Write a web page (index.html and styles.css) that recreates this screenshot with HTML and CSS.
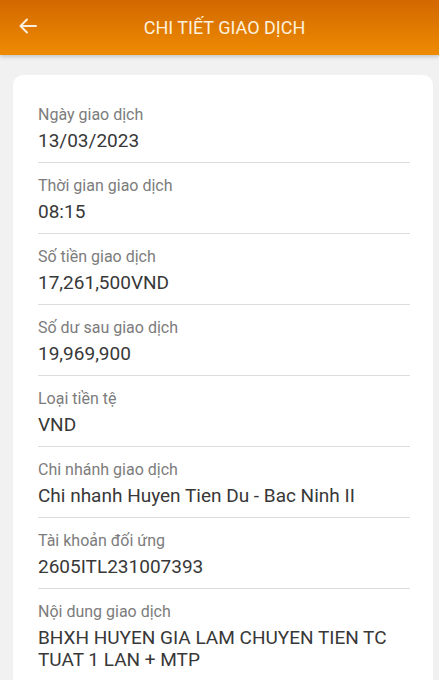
FILE: index.html
```html
<!DOCTYPE html>
<html lang="vi">
<head>
<meta charset="utf-8">
<title>Chi tiết giao dịch</title>
<link rel="stylesheet" href="styles.css">
</head>
<body>
<header class="appbar">
  <button class="back" aria-label="Quay lại">
    <svg width="18" height="16" viewBox="0 0 18 16" fill="none" stroke="currentColor" stroke-width="2" stroke-linecap="round" stroke-linejoin="round"><path d="M17 8H2M8 1.5L1.5 8 8 14.5"/></svg>
  </button>
  <h1 class="title">CHI TIẾT GIAO DỊCH</h1>
</header>
<main class="content">
  <section class="card">
    <div class="row"><div class="label">Ngày giao dịch</div><div class="value">13/03/2023</div></div>
    <div class="row"><div class="label">Thời gian giao dịch</div><div class="value">08:15</div></div>
    <div class="row"><div class="label">Số tiền giao dịch</div><div class="value">17,261,500VND</div></div>
    <div class="row"><div class="label">Số dư sau giao dịch</div><div class="value">19,969,900</div></div>
    <div class="row"><div class="label">Loại tiền tệ</div><div class="value">VND</div></div>
    <div class="row"><div class="label">Chi nhánh giao dịch</div><div class="value">Chi nhanh Huyen Tien Du - Bac Ninh II</div></div>
    <div class="row"><div class="label">Tài khoản đối ứng</div><div class="value">2605ITL231007393</div></div>
    <div class="row last"><div class="label">Nội dung giao dịch</div><div class="value">BHXH HUYEN GIA LAM CHUYEN TIEN TC TUAT 1 LAN + MTP</div></div>
  </section>
</main>
</body>
</html>
```
FILE: styles.css
```css
* { box-sizing: border-box; }
html, body { margin: 0; padding: 0; }
body {
  background: #f1f1f1;
  font-family: Roboto, "Noto Sans", "Liberation Sans", sans-serif;
  width: 439px;
  height: 680px;
  overflow: hidden;
}
.appbar {
  height: 55px;
  background: linear-gradient(to bottom, #d26800, #ee8b02);
  display: flex;
  align-items: center;
  justify-content: center;
  position: relative;
  box-shadow: 0 2px 4px rgba(0,0,0,0.18);
}
.back {
  position: absolute;
  left: 19px;
  top: 18px;
  width: 18px;
  height: 16px;
  padding: 0;
  border: 0;
  background: none;
  color: #fbeedd;
  display: flex;
}
.title {
  margin: 0 0 0 10px;
  font-size: 18px;
  font-weight: 400;
  color: #fdf0dc;
  letter-spacing: 0;
}
.content {
  padding: 20px 6px 0 13px;
}
.card {
  background: #fff;
  border-radius: 10px;
  padding: 17px 23px 0 25px;
  min-height: 700px;
}
.row {
  padding: 12px 0 10px;
  border-bottom: 1px solid #dcdcdc;
}
.row.last { border-bottom: 0; }
.label {
  font-size: 16px;
  line-height: 22px;
  color: #7c7c7c;
}
.value {
  margin-top: 4px;
  font-size: 19px;
  line-height: 22px;
  color: #383838;
}
```
